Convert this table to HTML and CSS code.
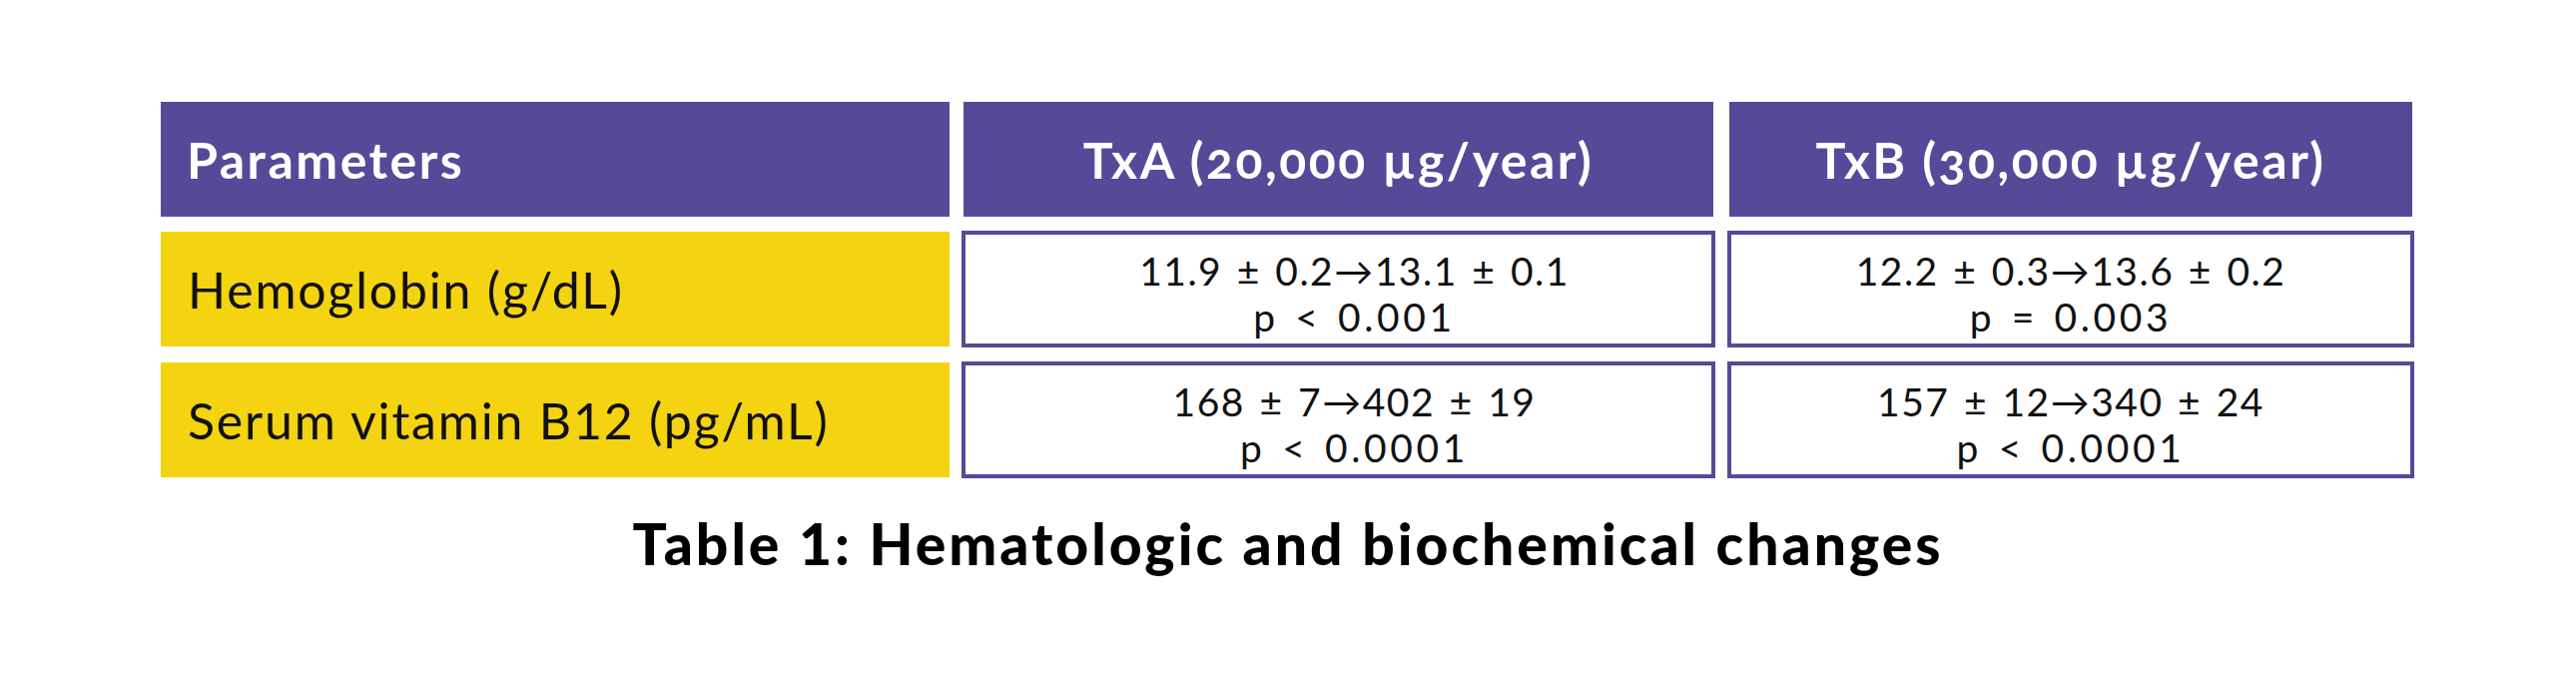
FILE: index.html
```html
<!DOCTYPE html>
<html lang="en">
<head>
<meta charset="utf-8">
<title>Table 1: Hematologic and biochemical changes</title>
<link rel="stylesheet" href="styles.css">
</head>
<body>
<main class="page">
  <div class="table">
    <div class="cell head label-col">Parameters</div>
    <div class="cell head">TxA (20,000 µg/year)</div>
    <div class="cell head">TxB (30,000 µg/year)</div>

    <div class="cell label">Hemoglobin (g/dL)</div>
    <div class="cell value value-a"><span>11.9 ± 0.2→13.1 ± 0.1</span><span class="pval">p &lt; 0.001</span></div>
    <div class="cell value"><span>12.2 ± 0.3→13.6 ± 0.2</span><span class="pval">p = 0.003</span></div>

    <div class="cell label">Serum vitamin B12 (pg/mL)</div>
    <div class="cell value value-a"><span>168 ± 7→402 ± 19</span><span class="pval">p &lt; 0.0001</span></div>
    <div class="cell value"><span>157 ± 12→340 ± 24</span><span class="pval">p &lt; 0.0001</span></div>
  </div>
  <p class="caption">Table 1: Hematologic and biochemical changes</p>
</main>
</body>
</html>
```

FILE: styles.css
```css
html, body {
  margin: 0;
  padding: 0;
  background: #ffffff;
}

body {
  font-family: "Lato", "Noto Sans", "DejaVu Sans", sans-serif;
  color: #111111;
  width: 2580px;
  height: 683px;
  overflow: hidden;
}

.page {
  padding: 102px 0 0 161px;
}

.table {
  display: grid;
  grid-template-columns: 790px 755px 688px;
  grid-template-rows: 115px 117px 117px;
  column-gap: 12px;
  row-gap: 14px;
}

.cell {
  box-sizing: border-box;
  display: flex;
  align-items: center;
}

.head {
  background: #564a98;
  color: #ffffff;
  font-weight: 700;
  font-size: 50px;
  letter-spacing: 2.5px;
  justify-content: center;
  margin: 0 2px;
  font-variant-numeric: oldstyle-nums;
}

.head.label-col {
  justify-content: flex-start;
  padding-left: 26px;
  margin: 0;
}

.label {
  background: #f4d311;
  font-size: 50px;
  font-weight: 400;
  letter-spacing: 1.8px;
  padding-left: 27px;
  margin: 1px 0;
}

.value {
  border: 4px solid #564a98;
  background: #ffffff;
  flex-direction: column;
  justify-content: center;
  font-size: 39px;
  line-height: 46px;
  letter-spacing: 1.5px;
  word-spacing: 3px;
  text-align: center;
  padding-top: 8px;
}

.value .pval {
  letter-spacing: 3.6px;
}

.value-a {
  padding-left: 32px;
}

.caption {
  margin: 30px 0 0 0;
  width: 2258px;
  text-align: center;
  font-weight: 900;
  font-size: 57px;
  line-height: 70px;
  letter-spacing: 3px;
  color: #000000;
}
```
